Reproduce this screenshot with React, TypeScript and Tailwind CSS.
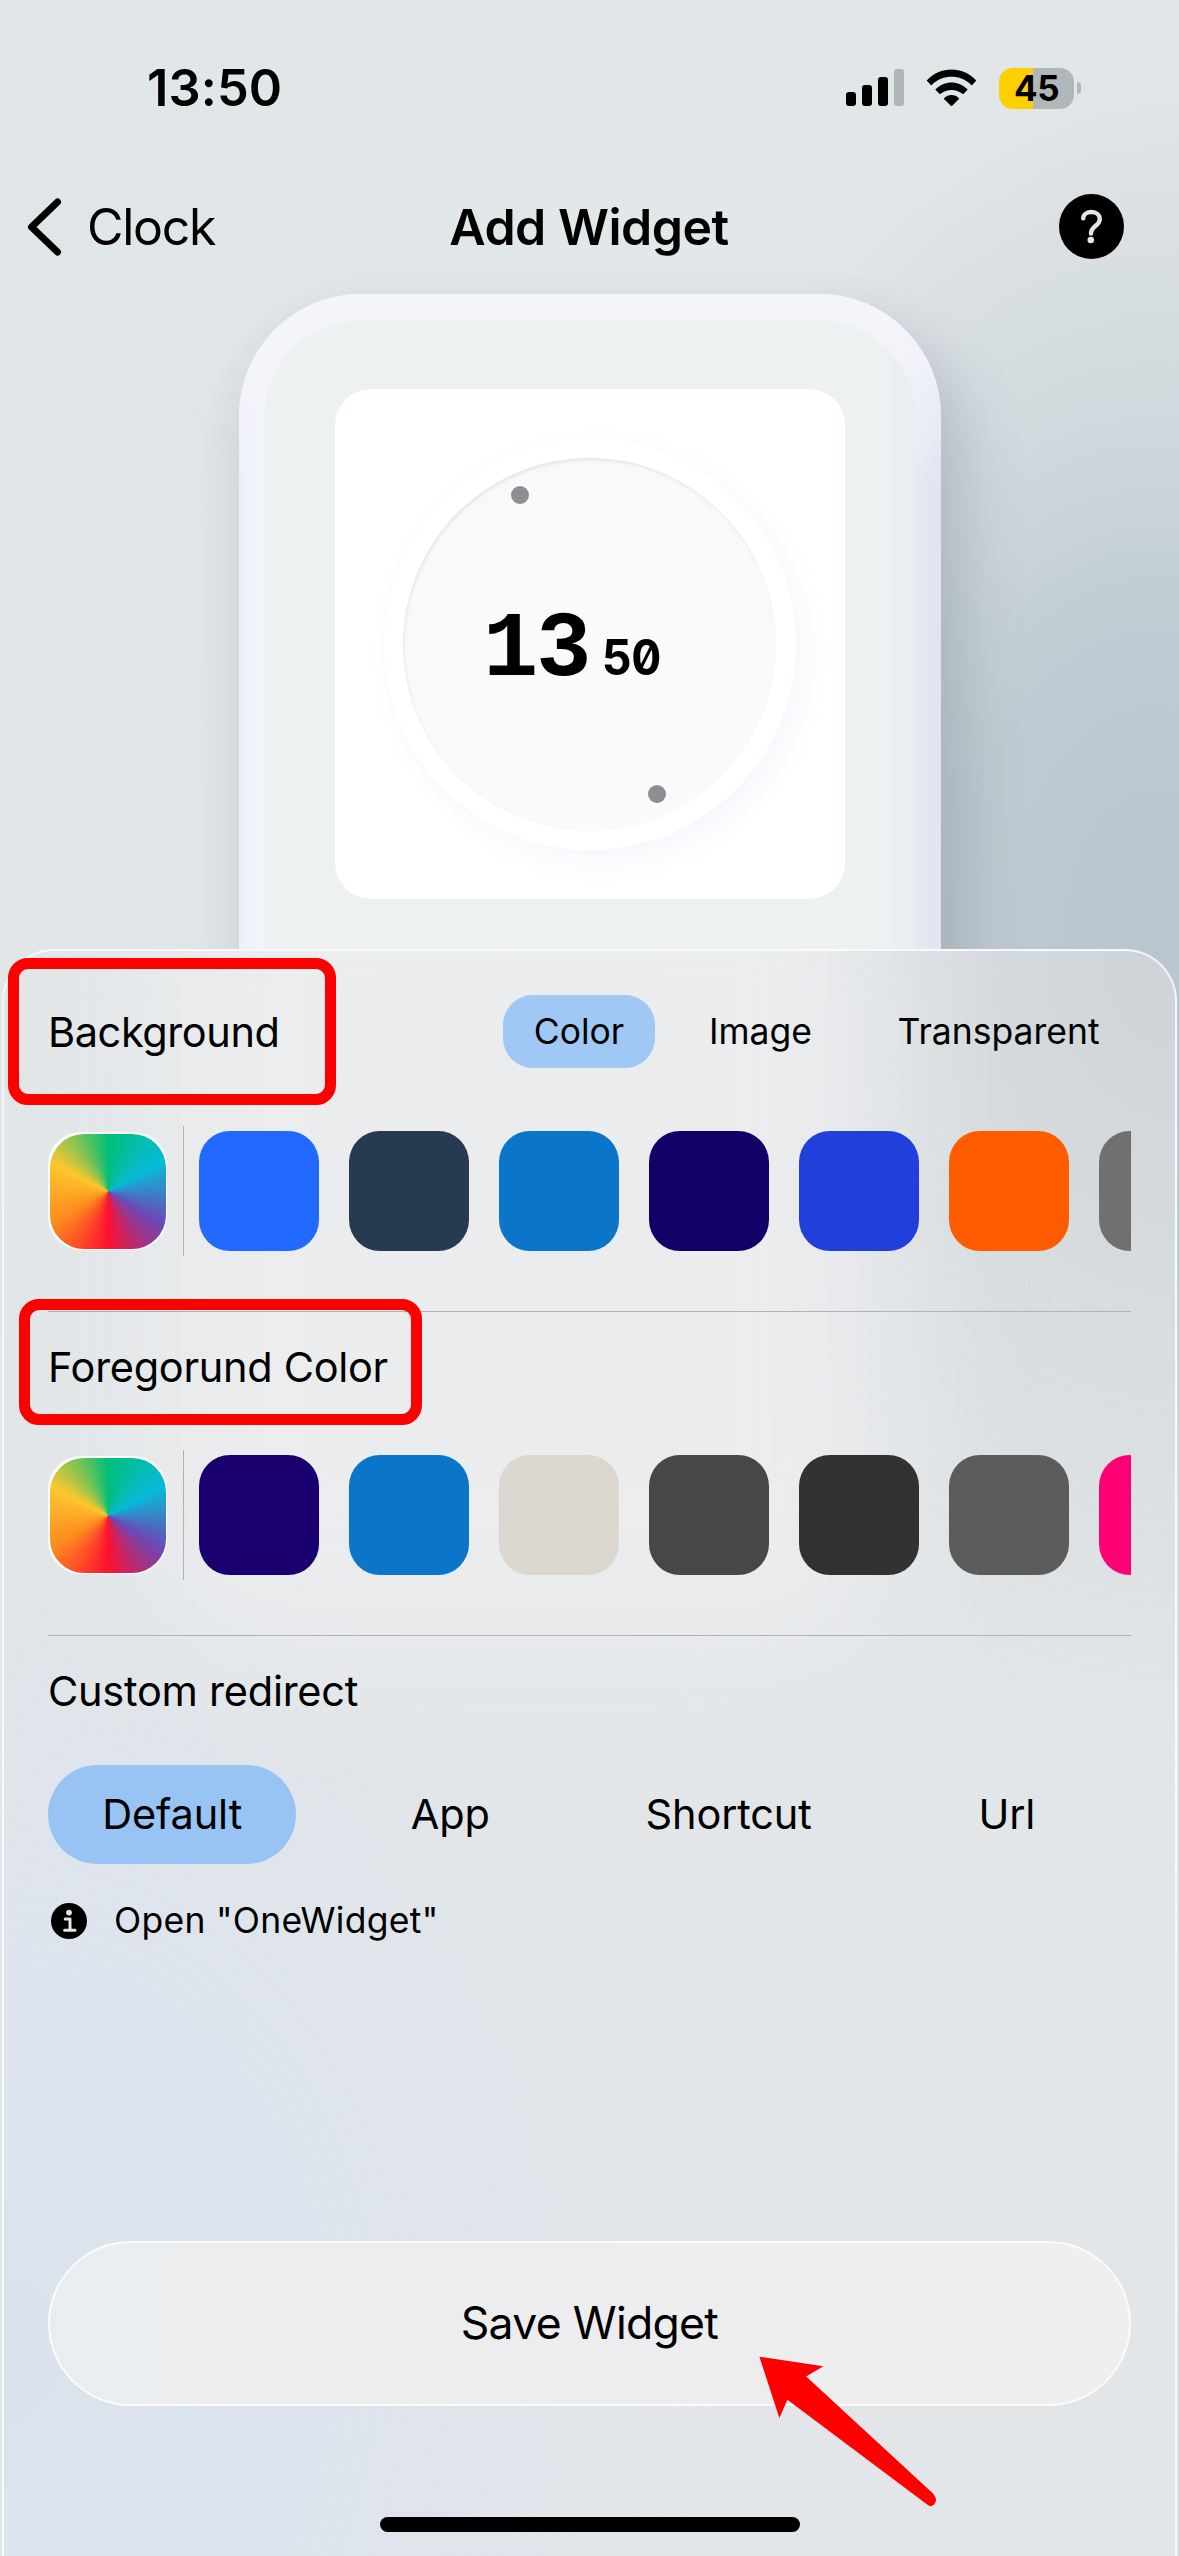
import React from "react";

const backgroundColors = ["#2169ff", "#273a52", "#0b76c9", "#130067", "#203fdb", "#ff5b00", "#707070"];
const foregroundColors = ["#19006e", "#0b76c9", "#dcd8d0", "#474747", "#323232", "#5c5c5c", "#ff0074"];

function StatusBar() {
  return (
    <div className="flex h-[176px] shrink-0 items-center justify-between pl-[147px] pr-[98px]">
      <span className="text-[50.5px] font-semibold leading-none tracking-[0.1px]">13:50</span>
      <div className="flex items-center">
        <svg width="58" height="38" viewBox="0 0 58 38" className="mr-[22px]">
          <rect x="0" y="23" width="10" height="14" rx="3" />
          <rect x="16" y="16" width="10" height="21" rx="3" />
          <rect x="32" y="8" width="10" height="29" rx="3" />
          <rect x="48" y="0" width="10" height="37" rx="3" fill="#b1b5b8" />
        </svg>
        <svg width="51" height="38" viewBox="0 0 51 38" className="mr-[22px]">
          <path d="M0.7 11.6C14 -3.1 37 -3.1 50.3 11.6L46.2 15.9Q45.6 16.4 45 15.8C34.3 5.2 16.7 5.2 6 15.8Q5.4 16.4 4.8 15.9Z" />
          <path d="M9.3 20.6C18.5 11.2 32.5 11.2 41.7 20.6L37.7 24.7Q37 25.3 36.4 24.7C30.5 19.6 20.5 19.6 14.6 24.7Q14 25.3 13.3 24.7Z" />
          <path d="M18.2 29.2C22 24.8 29 24.8 32.8 29.2Q33.2 29.8 32.7 30.3L26.2 36.8Q25.5 37.4 24.8 36.8L18.3 30.3Q17.8 29.8 18.2 29.2Z" />
        </svg>
        <div className="flex h-[41px] w-[75px] items-center justify-center rounded-[14px] bg-[linear-gradient(90deg,#ffcf00_34px,#b1b6b9_34px)]">
          <span className="text-[35px] font-bold leading-none tracking-[-0.6px]">45</span>
        </div>
        <div className="ml-[3px] h-[12px] w-[4px] rounded-r-full bg-[#b1b6b9]" />
      </div>
    </div>
  );
}

function NavBar() {
  return (
    <div className="grid h-[101px] shrink-0 grid-cols-3 items-center pl-[27px] pr-[55px]">
      <div className="flex items-center">
        <svg width="36" height="58" viewBox="0 0 36 58" fill="none" stroke="#000" strokeWidth="7" strokeLinecap="round" strokeLinejoin="round">
          <path d="M30.5 4L4.5 29L30.5 54" />
        </svg>
        <span className="ml-[24px] text-[50px] leading-none tracking-[-1.3px]">Clock</span>
      </div>
      <span className="ml-[27px] whitespace-nowrap text-center text-[50px] font-semibold leading-none tracking-[-0.5px]">Add Widget</span>
      <svg width="65" height="65" viewBox="0 0 65 65" className="justify-self-end">
        <circle cx="32.5" cy="32.5" r="32.5" />
        <path d="M24.2 24.3C24.6 15.8 40.8 15.8 40.8 25.2C40.8 32 32 31.6 32 39.6" fill="none" stroke="#e2e6e8" strokeWidth="4.4" strokeLinecap="round" />
        <circle cx="31.8" cy="46" r="3.3" fill="#e2e6e8" />
      </svg>
    </div>
  );
}

function ClockWidget() {
  return (
    <div className="flex h-[510px] w-[510px] items-center justify-center rounded-[36px] bg-white">
      <div className="flex h-[412px] w-[412px] items-center justify-center rounded-full bg-white shadow-[10px_12px_26px_rgba(130,150,200,0.08),-3px_-3px_8px_rgba(0,0,0,0.012)]">
        <div className="relative flex h-[373px] w-[373px] items-baseline rounded-full bg-[#fafafa] pl-[80px] pt-[144px] shadow-[inset_1px_2px_3px_rgba(0,0,0,0.07),inset_2px_5px_16px_rgba(0,0,0,0.02)]">
          <div className="absolute left-[108px] top-[28px] h-[18px] w-[18px] rounded-full bg-[#8e8d94]" />
          <div className="absolute left-[245px] top-[327px] h-[18px] w-[18px] rounded-full bg-[#8e8d94]" />
          <span className="font-['Liberation_Mono',monospace] text-[92px] font-bold leading-[98px] tracking-[-2px]">13</span>
          <span className="ml-[13px] origin-left scale-x-[0.95] text-[49px] font-bold tabular-nums slashed-zero tracking-[-1px]">50</span>
        </div>
      </div>
    </div>
  );
}

function DevicePreview() {
  return (
    <div className="mt-[17px] h-[655px] shrink-0">
      <div className="mx-auto h-[800px] w-[702px] rounded-t-[122px] bg-[linear-gradient(90deg,#edf0f8_0px,#f3f5fa_22px,#f3f5fa_620px,#e0e4f0_702px)] shadow-[24px_40px_60px_rgba(90,105,115,0.24),-4px_20px_50px_rgba(120,135,145,0.12)]">
        <div className="flex h-full w-[702px] items-start justify-center rounded-t-[122px] bg-[linear-gradient(180deg,#f4f5fa_0px,#f4f5fa_30px,transparent_190px)] pt-[26px]">
          <div className="flex h-[773px] w-[652px] items-start justify-center rounded-t-[98px] bg-[linear-gradient(90deg,#edf1f2_620px,#e9edf3_652px)] pt-[69px]">
            <ClockWidget />
          </div>
        </div>
      </div>
    </div>
  );
}

function SwatchRow({ colors }: { colors: string[] }) {
  return (
    <div className="flex h-[130px] items-center overflow-hidden">
      <div className="flex h-[118px] w-[119px] shrink-0 items-center justify-center rounded-[33px] bg-white/90">
        <div className="h-[115px] w-[116px] rounded-[34px] bg-[conic-gradient(#00bf78_0deg,#07bad8_62deg,#6c48b6_122deg,#ff1030_180deg,#fc8c1e_240deg,#fbc72e_298deg,#00bf78_360deg)]" />
      </div>
      <div className="ml-[16px] mr-[15px] h-full w-px shrink-0 bg-[#b0b2b4]" />
      <div className="flex gap-[30px]">
        {colors.map((color) => (
          <div key={color} className="h-[120px] w-[120px] shrink-0 rounded-[31px]" style={{ backgroundColor: color }} />
        ))}
      </div>
    </div>
  );
}

function Highlight({ className }: { className: string }) {
  return <div className={`absolute rounded-[20px] border-[11px] border-[#ff0000] ${className}`} />;
}

function Tabs() {
  return (
    <div className="flex h-[73px] gap-[24px] text-[35.5px] leading-[73px]">
      <span className="w-[152px] rounded-[30px] bg-[#9fc9f4] text-center">Color</span>
      <span className="w-[163px] text-center">Image</span>
      <span className="w-[265px] text-center">Transparent</span>
    </div>
  );
}

function SettingsPanel() {
  return (
    <div className="relative mx-[2px] flex h-[1650px] w-[1175px] shrink-0 flex-col rounded-t-[52px] border-2 border-white/75 bg-[radial-gradient(ellipse_600px_800px_at_100%_0%,#cdd3d7_0%,#d7dcdf_45%,rgba(226,230,232,0)_100%),radial-gradient(ellipse_700px_850px_at_0%_85%,#dae3ed_0%,#dde4ed_45%,rgba(227,231,233,0)_100%),linear-gradient(#e2e6e8,#e3e6e8)]">
      <div className="absolute inset-0 overflow-hidden rounded-t-[50px]">
        <div className="absolute left-[140px] top-[-150px] h-[850px] w-[750px] rounded-[100px] bg-[#ebecee] blur-[70px]" />
      </div>
      <div className="relative flex w-[1127px] flex-col pl-[44px] pt-[44px]">
        <div className="relative flex items-center justify-between">
          <Highlight className="left-[-40px] top-[-37px] h-[147px] w-[328px]" />
          <h2 className="text-[41.5px] leading-[50px] tracking-[-0.42px]">Background</h2>
          <Tabs />
        </div>
        <div className="mt-[58px]">
          <SwatchRow colors={backgroundColors} />
        </div>
        <div className="mt-[55px] h-px bg-[#b0b2b6]" />
        <div className="relative mt-[30px]">
          <Highlight className="left-[-29px] top-[-43px] h-[126px] w-[403px]" />
          <h2 className="text-[41.5px] leading-[50px] tracking-[-0.3px]">Foregorund Color</h2>
        </div>
        <div className="mt-[58px]">
          <SwatchRow colors={foregroundColors} />
        </div>
        <div className="mt-[55px] h-px bg-[#b0b2b6]" />
        <h2 className="mt-[30px] text-[41.5px] leading-[50px] tracking-[-0.25px]">Custom redirect</h2>
        <div className="mt-[49px] grid grid-cols-4 gap-[30px] text-center text-[41.5px] leading-[99px] tracking-[-0.15px]">
          <span className="rounded-[49.5px] bg-[#98c4f4]">Default</span>
          <span>App</span>
          <span>Shortcut</span>
          <span>Url</span>
        </div>
        <div className="mt-[37px] flex h-[40px] items-center pl-[3px]">
          <svg width="36" height="36" viewBox="0 0 36 36">
            <circle cx="18" cy="18" r="18" />
            <circle cx="18" cy="9.6" r="2.9" fill="#e2e6e9" />
            <path d="M14.2 16H19V27.2M13.6 27.2H24" fill="none" stroke="#e2e6e9" strokeWidth="3" strokeLinecap="round" strokeLinejoin="round" />
          </svg>
          <span className="ml-[27px] whitespace-nowrap text-[35.5px] leading-none tracking-[0.28px]">Open "OneWidget"</span>
        </div>
        <button className="relative mt-[300px] flex h-[165px] items-center justify-center rounded-full border-2 border-white/75 bg-[linear-gradient(90deg,#eaedef,#ededef_50%,#efefef)] text-[44.5px] tracking-[-0.7px]">
          Save Widget
        </button>
        <div className="ml-[332px] mt-[111px] h-[15px] w-[420px] rounded-full bg-black" />
      </div>
    </div>
  );
}

function PointerArrow() {
  return (
    <svg width="180" height="154" viewBox="758 2355 180 154" className="absolute left-[758px] top-[2355px]">
      <path d="M759.4 2356.7L823.3 2366.3L806.2 2376.4L933 2493.6Q938.5 2500 934 2504.6Q930.5 2508 926.5 2504L787.4 2399.7L779.4 2418Z" fill="#ff0000" />
    </svg>
  );
}

export default function App() {
  return (
    <div className="relative flex h-[2556px] w-[1179px] flex-col overflow-hidden bg-[radial-gradient(ellipse_560px_820px_at_98%_920px,#b8c5cd_0%,#bfcbd2_35%,#d2dade_65%,rgba(225,230,232,0)_100%),linear-gradient(100deg,#e0e5e8_0%,#e2e7e9_45%,#dde2e5_100%)] font-['Inter',sans-serif] text-black">
      <StatusBar />
      <NavBar />
      <DevicePreview />
      <SettingsPanel />
      <PointerArrow />
    </div>
  );
}
